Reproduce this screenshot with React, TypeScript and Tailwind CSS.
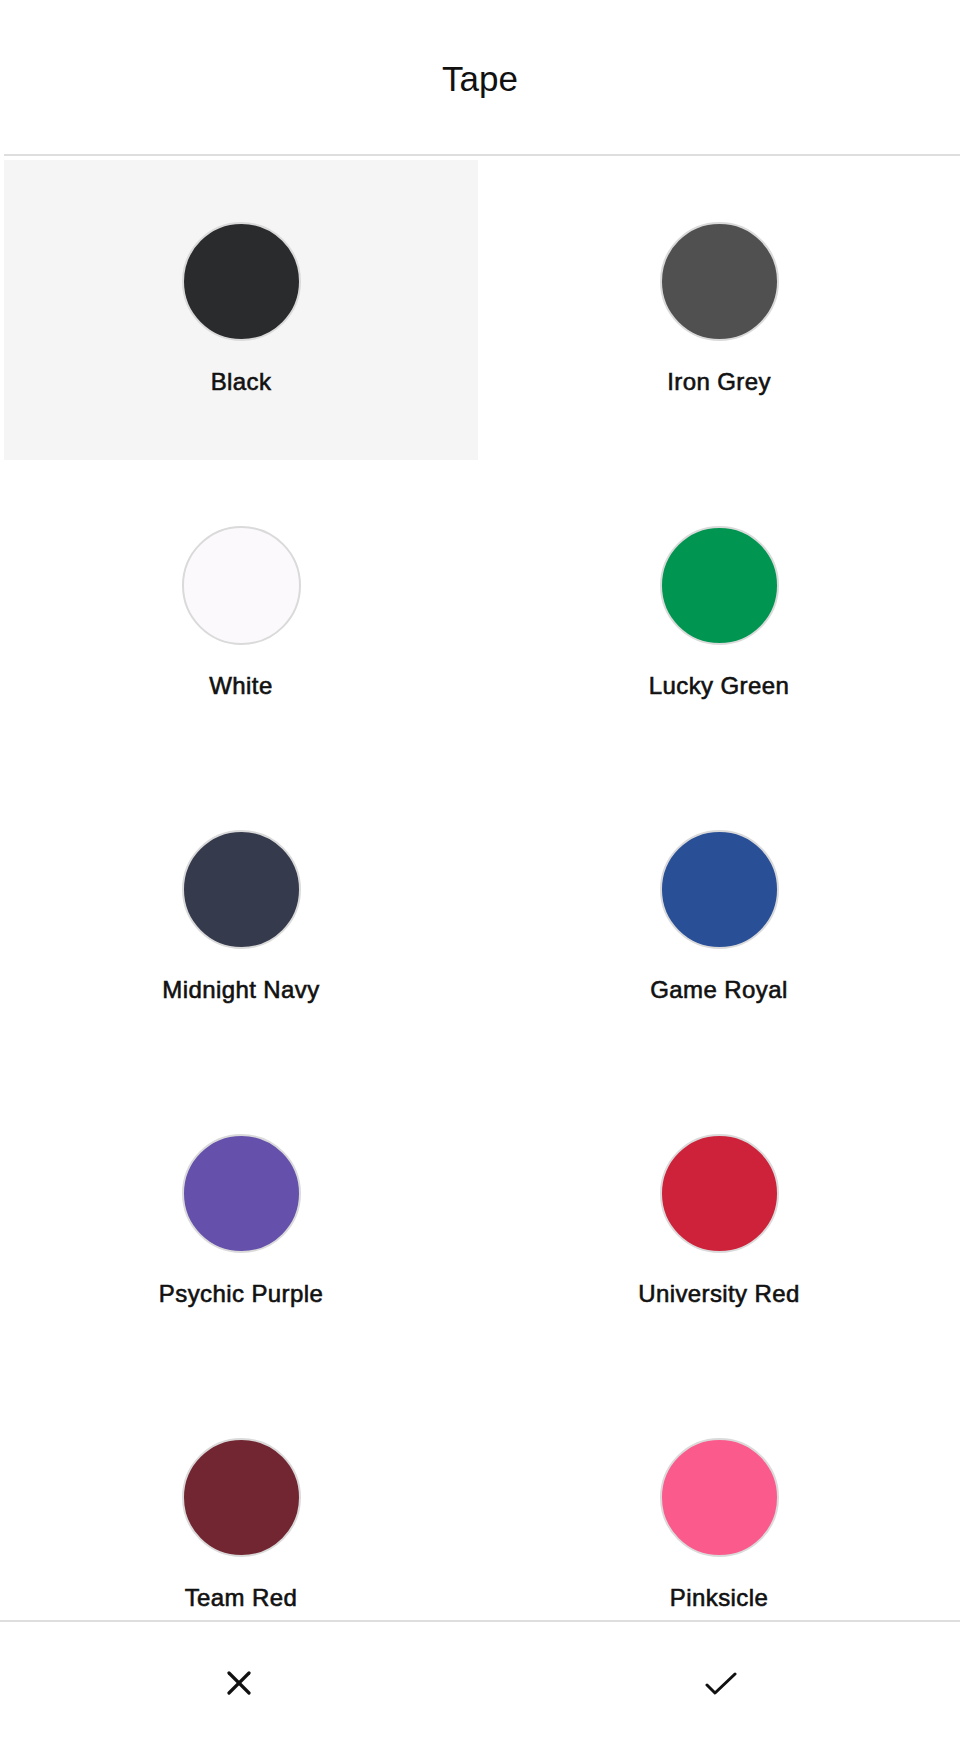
const tapes = [
  { name: "Black", color: "bg-[#2a2b2d]", selected: true },
  { name: "Iron Grey", color: "bg-[#505050]" },
  { name: "White", color: "bg-[#fbf9fc]" },
  { name: "Lucky Green", color: "bg-[#009551]" },
  { name: "Midnight Navy", color: "bg-[#353a4c]" },
  { name: "Game Royal", color: "bg-[#294f97]" },
  { name: "Psychic Purple", color: "bg-[#6550ab]" },
  { name: "University Red", color: "bg-[#cd223a]" },
  { name: "Team Red", color: "bg-[#722632]" },
  { name: "Pinksicle", color: "bg-[#fb5a8c]" },
];

function CloseIcon() {
  return (
    <svg width="24" height="24" viewBox="0 0 24 24" fill="none" stroke="#111" strokeWidth="3.2" strokeLinecap="round">
      <line x1="2" y1="2" x2="22" y2="22" />
      <line x1="22" y1="2" x2="2" y2="22" />
    </svg>
  );
}

function CheckIcon() {
  return (
    <svg width="32" height="24" viewBox="0 0 32 24" fill="none" stroke="#111" strokeWidth="3" strokeLinecap="round" strokeLinejoin="round">
      <polyline points="2,13 10,21 30,2" />
    </svg>
  );
}

export default function App() {
  return (
    <div className="flex h-[1744px] w-[960px] flex-col overflow-hidden bg-white text-[#111]" style={{ fontFamily: '"Liberation Sans", Arial, sans-serif' }}>
      <div className="flex h-[154px] shrink-0 items-center justify-center pt-[2px]">
        <h1 className="text-[35px] font-normal leading-none">Tape</h1>
      </div>
      <div className="ml-1 h-[2px] shrink-0 bg-[#dedede]" />

      <div className="min-h-0 flex-1 overflow-hidden">
        <div className="grid grid-cols-2 gap-1 px-1 pt-1">
          {tapes.map((t) => (
            <div
              key={t.name}
              className={`flex h-[300px] flex-col items-center pt-[62px] ${t.selected ? "bg-[#f5f5f5]" : ""}`}
            >
              <div className={`h-[119px] w-[119px] rounded-full border-2 border-[#dadada] ${t.color}`} />
              <p className="mt-[28px] text-[24px] font-normal leading-[26px] tracking-[0.4px] [-webkit-text-stroke:0.6px_#111]">{t.name}</p>
            </div>
          ))}
        </div>
      </div>

      <div className="flex h-[124px] shrink-0 border-t-2 border-[#dedede]">
        <button className="flex flex-1 items-center justify-center pr-[4px]">
          <CloseIcon />
        </button>
        <button className="flex flex-1 items-center justify-center pt-[2px]">
          <CheckIcon />
        </button>
      </div>
    </div>
  );
}
